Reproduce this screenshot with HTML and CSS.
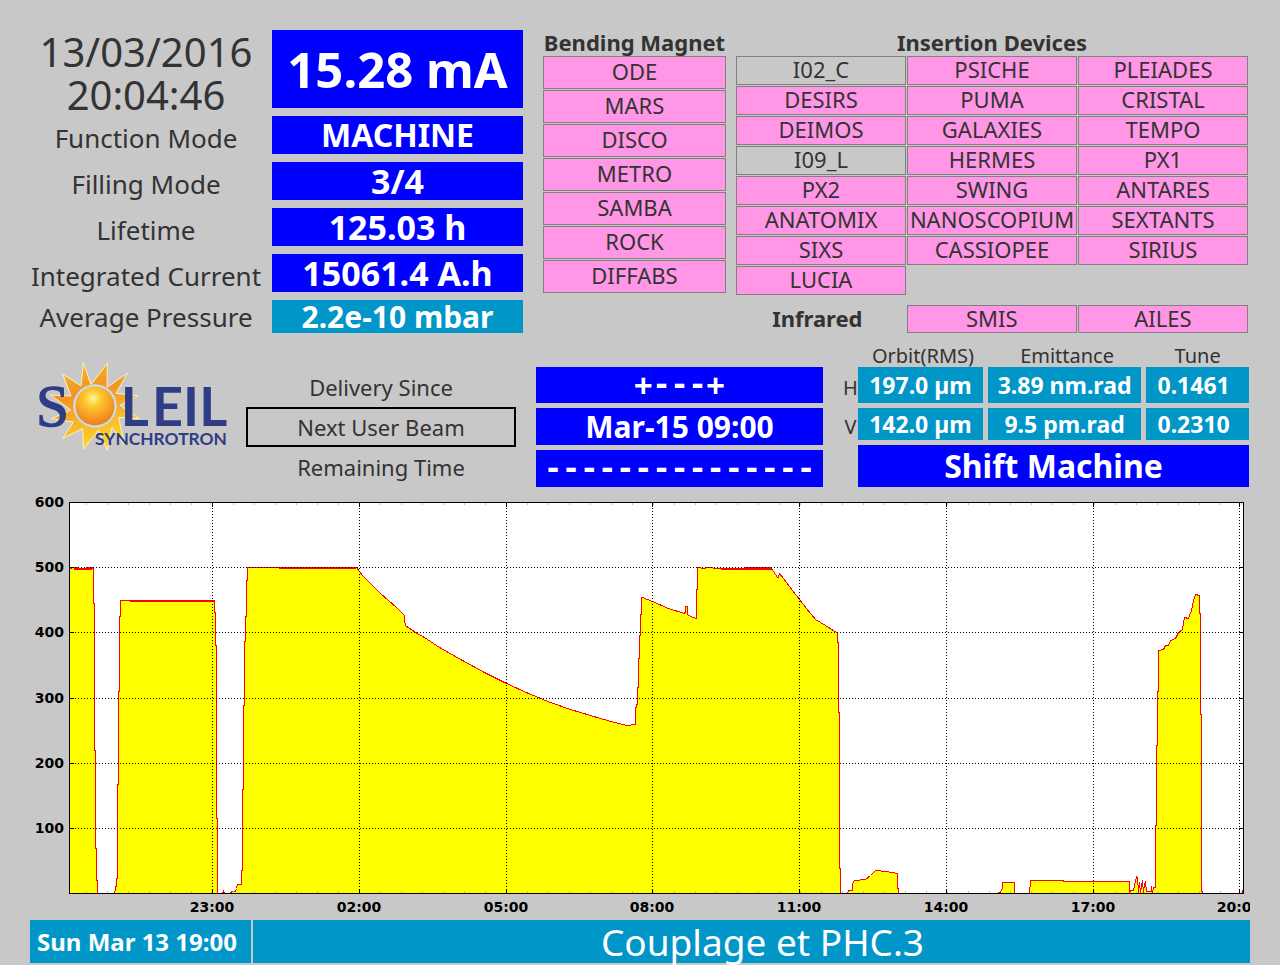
FILE: index.html
```html
<!DOCTYPE html>
<html lang="en">
<head>
  <meta charset="UTF-8">
  <title>SOLEIL Machine Status</title>
  <link rel="stylesheet" href="styles.css">
</head>
<body>
  <main>
    <section class="top">
      <div class="readings">
        <div class="clock">13/03/2016<br>20:04:46</div>
        <div class="value current">15.28 mA</div>
        <div class="label">Function Mode</div>
        <div class="value word">MACHINE</div>
        <div class="label">Filling Mode</div>
        <div class="value">3/4</div>
        <div class="label">Lifetime</div>
        <div class="value">125.03 h</div>
        <div class="label">Integrated Current</div>
        <div class="value">15061.4 A.h</div>
        <div class="label pressure-label">Average Pressure</div>
        <div class="value pressure">2.2e-10 mbar</div>
      </div>

      <div class="bending">
        <h2>Bending Magnet</h2>
        <ul class="beamlines">
          <li>ODE</li>
          <li>MARS</li>
          <li>DISCO</li>
          <li>METRO</li>
          <li>SAMBA</li>
          <li>ROCK</li>
          <li>DIFFABS</li>
        </ul>
      </div>

      <div class="insertion">
        <h2>Insertion Devices</h2>
        <ul class="beamlines">
          <li class="off">I02_C</li>
          <li>PSICHE</li>
          <li>PLEIADES</li>
          <li>DESIRS</li>
          <li>PUMA</li>
          <li>CRISTAL</li>
          <li>DEIMOS</li>
          <li>GALAXIES</li>
          <li>TEMPO</li>
          <li class="off">I09_L</li>
          <li>HERMES</li>
          <li>PX1</li>
          <li>PX2</li>
          <li>SWING</li>
          <li>ANTARES</li>
          <li>ANATOMIX</li>
          <li>NANOSCOPIUM</li>
          <li>SEXTANTS</li>
          <li>SIXS</li>
          <li>CASSIOPEE</li>
          <li>SIRIUS</li>
          <li>LUCIA</li>
        </ul>
        <div class="infrared">
          <h2>Infrared</h2>
          <ul class="beamlines">
            <li>SMIS</li>
            <li>AILES</li>
          </ul>
        </div>
      </div>
    </section>

    <section class="middle">
      <svg class="logo" viewBox="30 0 648 330" role="img" aria-label="SOLEIL Synchrotron">
        <defs>
          <radialGradient id="ball" cx="45%" cy="30%" r="70%">
            <stop offset="0" stop-color="#fff6a0"/>
            <stop offset="0.3" stop-color="#fdc82c"/>
            <stop offset="1" stop-color="#ee7d1c"/>
          </radialGradient>
          <linearGradient id="rays" x1="0" y1="0" x2="0.3" y2="1">
            <stop offset="0" stop-color="#fbc02a"/>
            <stop offset="0.4" stop-color="#f39324"/>
            <stop offset="1" stop-color="#fdd32c"/>
          </linearGradient>
        </defs>
        <path fill="url(#rays)" stroke="#fff3b8" stroke-width="3" stroke-linejoin="round" d="M190 38 L213 104 L262 40 L261 112 L322 70 L288 130 L353 137 L300 166 L358 206 L296 202 L313 285 L276 232 L262 301 L236 240 L190 297 L188 236 L128 265 L160 216 L95 206 L152 180 L92 135 L153 138 L128 72 L183 108 Z"/>
        <circle cx="225" cy="168" r="66" fill="#c8c8c8"/>
        <circle cx="225" cy="168" r="62" fill="none" stroke="#f4f0e4" stroke-width="2"/>
        <circle cx="225" cy="168" r="58" fill="url(#ball)"/>
        <text class="logo-name" y="227" x="48 302 396 489 538"><tspan class="logo-s">S</tspan>LEIL</text>
        <text class="logo-sub" x="225" y="285">SYNCHROTRON</text>
      </svg>

      <div class="status-labels">
        <div>Delivery Since</div>
        <div class="framed">Next User Beam</div>
        <div>Remaining Time</div>
      </div>

      <div class="status-values">
        <div class="dashes">+---+</div>
        <div>Mar-15 09:00</div>
        <div class="dashes">---------------</div>
      </div>

      <div class="beam">
        <table>
          <thead>
            <tr>
              <td class="corner"></td>
              <th scope="col" class="orbit">Orbit(RMS)</th>
              <th scope="col" class="emittance">Emittance</th>
              <th scope="col">Tune</th>
            </tr>
          </thead>
          <tbody>
            <tr class="horizontal">
              <th scope="row">H</th>
              <td>197.0 µm</td>
              <td>3.89 nm.rad</td>
              <td>0.1461</td>
            </tr>
            <tr class="vertical">
              <th scope="row">V</th>
              <td>142.0 µm</td>
              <td>9.5 pm.rad</td>
              <td>0.2310</td>
            </tr>
          </tbody>
        </table>
        <div class="shift">Shift Machine</div>
      </div>
    </section>

    <!-- stored current over the last 24 hours, in mA -->
    <svg class="chart" viewBox="30 497 1220 418" role="img" aria-label="Stored current, last 24 hours">
      <rect x="69" y="502" width="1175" height="392" fill="#fff"/>
      <g class="plot" transform="translate(0.5 0.5)">
        <polygon class="data" points="69,893 69,568 75,567 80,568 92,567 93,569 93,603 94,603 94,750 95,750 95,848 96,848 96,880 97,880 97,893 114,893 115,888 116,884 116,878 117,878 117,784 118,784 118,691 119,691 119,616 120,616 120,600 214,600 214,612 215,612 215,645 216,645 216,818 217,818 217,893 222,893 223,891 224,893 230,893 231,891 235,891 236,888 237,884 241,884 241,870 242,870 242,789 243,789 243,705 244,705 244,641 245,641 245,616 246,616 246,580 247,580 247,567 356,567 362,575 371,584 380,593 388,600 396,607 402,613 404,615 404,620 405,625 415,632 424,637 439,647 462,660 484,672 506,683 528,693 550,702 570,709 590,715 600,718 614,722 627,725 635,724 635,707 636,707 636,704 637,704 637,687 638,687 638,658 639,658 639,635 640,635 640,614 641,614 641,597 642,597 652,601 668,608 684,613 685,611 685,606 687,606 687,614 690,616 696,618 696,589 697,589 697,567 703,568 707,567 718,568 770,567 773,571 777,577 778,577 779,573 783,578 792,590 799,599 806,608 815,619 825,625 836,632 837,633 837,642 838,642 838,712 839,712 839,868 840,868 840,893 847,893 848,890 852,890 852,883 854,880 865,879 870,875 875,870 886,871 897,873 897,888 898,888 898,893 997,893 1001,891 1002,887 1002,882 1014,882 1014,893 1029,893 1030,880 1063,880 1063,881 1129,881 1129,893 1130,890 1133,890 1134,885 1136,876 1137,877 1138,892 1139,882 1140,892 1141,885 1142,880 1143,892 1144,884 1145,881 1146,891 1151,891 1151,886 1152,893 1153,887 1155,887 1155,825 1156,825 1156,745 1157,745 1157,691 1158,691 1158,650 1163,649 1165,645 1168,645 1170,640 1175,638 1178,632 1182,629 1184,617 1188,618 1191,610 1193,600 1195,594 1199,595 1199,613 1200,613 1200,714 1201,714 1201,889 1202,893 1242,893 1242,890 1243,893"/>
        <path class="noise" d="M73 568 H91 M129 600 H214 M278 567 H355 M720 568 H770"/>
        <path class="minor" transform="translate(-0.5 -0.5)" d="M86 504 H1243 M86 892 H1243"/>
        <path class="grid" transform="translate(-0.5 0)" d="M69 567 H1243 M69 632 H1243 M69 698 H1243 M69 763 H1243 M69 828 H1243"/>
        <path class="grid" transform="translate(0 -0.5)" d="M212 502 V893 M359 502 V893 M506 502 V893 M652 502 V893 M799 502 V893 M946 502 V893 M1093 502 V893 M1239 502 V893"/>
        <path class="axis" d="M212 502 v4 M359 502 v4 M506 502 v4 M652 502 v4 M799 502 v4 M946 502 v4 M1093 502 v4 M1239 502 v4 M212 893 v-4 M359 893 v-4 M506 893 v-4 M652 893 v-4 M799 893 v-4 M946 893 v-4 M1093 893 v-4 M1239 893 v-4"/>
        <path class="axis" d="M69 567 h4 M69 632 h4 M69 698 h4 M69 763 h4 M69 828 h4 M1243 567 h-4 M1243 632 h-4 M1243 698 h-4 M1243 763 h-4 M1243 828 h-4"/>
        <rect class="axis" x="69" y="502" width="1174" height="391"/>
      </g>
      <g class="y-labels">
        <text x="64" y="507">600</text>
        <text x="64" y="572">500</text>
        <text x="64" y="637">400</text>
        <text x="64" y="703">300</text>
        <text x="64" y="768">200</text>
        <text x="64" y="833">100</text>
      </g>
      <g class="x-labels">
        <text x="212" y="912">23:00</text>
        <text x="359" y="912">02:00</text>
        <text x="506" y="912">05:00</text>
        <text x="652" y="912">08:00</text>
        <text x="799" y="912">11:00</text>
        <text x="946" y="912">14:00</text>
        <text x="1093" y="912">17:00</text>
        <text x="1239" y="912">20:00</text>
      </g>
    </svg>

    <footer>
      <div class="date">Sun Mar 13 19:00</div>
      <div class="message">Couplage et PHC.3</div>
    </footer>
  </main>
</body>
</html>
```
FILE: styles.css
```css
* { box-sizing: border-box; }
body { margin: 0; padding: 30px 30px 2px; background: #c8c8c8; color: #333; font-family: "Noto Sans", sans-serif; white-space: nowrap; }
h2 { margin: 0; padding-bottom: 2px; font-size: 22px; line-height: 24px; text-align: center; }
ul { margin: 0; padding: 0; list-style: none; }

.top { display: grid; grid-template-columns: minmax(0, 493fr) minmax(0, 203fr) minmax(0, 522fr); padding-right: 2px; }
.bending { margin-left: 20px; }
.insertion { margin-left: 10px; }

/* left block */
.readings { display: grid; grid-template-columns: minmax(0, 242fr) minmax(0, 251fr); row-gap: 8px; }
.clock { margin: 0 10px -8px 0; font-size: 40px; line-height: 43px; text-align: center; }
.label { display: flex; align-items: center; justify-content: center; padding: 6px 10px 0 0; font-size: 26px; line-height: 32px; }
.pressure-label { padding-top: 0; }
.value { display: flex; align-items: center; justify-content: center; min-height: 38px; background: #00f; color: #fff; font-size: 34px; font-weight: bold; line-height: 32px; }
.current { min-height: 78px; font-size: 49px; }
.word { font-size: 32px; }
.pressure { min-height: 33px; background: #0096c8; font-size: 30px; }

/* beamlines */
.beamlines { display: grid; gap: 1px; }
.beamlines li { padding-bottom: 2px; border: 1px solid #808080; background: #ff96e6; font-size: 22px; line-height: 29px; text-align: center; }
.beamlines .off { background: none; }
.insertion .beamlines { grid-template-columns: repeat(3, minmax(0, 1fr)); }
.insertion .beamlines li { line-height: 25px; }
.infrared { display: grid; grid-template-columns: minmax(0, 1fr) minmax(0, 2fr); align-items: center; margin-top: 10px; }
.infrared h2 { padding-right: 8px; }
.insertion .infrared .beamlines { grid-template-columns: repeat(2, minmax(0, 1fr)); }
.insertion .infrared li { line-height: 24px; }

/* logo, delivery and beam quality */
.middle { display: grid; grid-template-columns: minmax(0, 216fr) minmax(0, 270fr) minmax(0, 307fr) minmax(0, 426fr); align-items: end; margin-top: 12px; padding-right: 1px; }
.logo { align-self: start; width: 100%; margin-top: 5px; }
.logo-name { fill: #2f3c86; font-family: Lato, sans-serif; font-size: 162px; font-weight: bold; }
.logo-s { font-family: "Liberation Serif", serif; font-size: 178px; font-weight: normal; stroke: #2f3c86; stroke-width: 4; }
.logo-sub { fill: #2f3c86; font-family: Lato, sans-serif; font-size: 52px; font-weight: bold; }
.status-labels { font-size: 22px; line-height: 40px; text-align: center; }
.status-labels .framed { border: 2px solid #000; line-height: 36px; }
.status-values { display: grid; gap: 5px; margin-left: 20px; }
.status-values div { background: #00f; color: #fff; font-size: 30px; font-weight: bold; line-height: 37px; text-align: center; }
.status-values .dashes { font-family: "DejaVu Sans Mono", monospace; }
.status-values div:first-child { line-height: 36px; }

.beam { margin-left: 20px; }
.beam table { width: 100%; border-collapse: separate; border-spacing: 0; table-layout: fixed; }
.beam th { padding: 0; font-size: 20px; font-weight: normal; line-height: 22px; }
.beam td { padding: 0; border-right: 5px solid #c8c8c8; border-bottom: 5px solid #c8c8c8; background: #0096c8; color: #fff; font-size: 23px; font-weight: bold; line-height: 30px; text-align: center; }
.beam td:last-child { padding-right: 8px; border-right: 0; }
.beam .corner { width: 15px; border: 0; background: none; }
.beam .orbit { width: 32%; }
.beam .emittance { width: 39%; }
.horizontal td { height: 41px; }
.vertical td { height: 37px; }
.shift { margin-left: 15px; background: #00f; color: #fff; font-size: 32px; font-weight: bold; line-height: 42px; text-align: center; }

/* chart */
.chart { display: block; width: 100%; margin-top: 10px; }
.chart text { fill: #000; font-family: "DejaVu Sans", sans-serif; font-size: 14px; font-weight: bold; }
.y-labels { text-anchor: end; }
.x-labels { text-anchor: middle; }
.plot { fill: none; stroke-width: 1; shape-rendering: crispEdges; }
.data { fill: #ff0; stroke: #f00; }
.noise { stroke: #f00; stroke-width: 2; }
.minor { stroke: #c0c0c0; stroke-width: 2; stroke-dasharray: 1 20; }
.grid { stroke: #000; stroke-dasharray: 1 2; }
.axis { stroke: #000; }

footer { display: grid; grid-template-columns: minmax(0, 221fr) minmax(0, 997fr); gap: 2px; margin-top: 5px; color: #fff; line-height: 43px; }
footer div { background: #0096c8; }
.date { padding-left: 7px; font-size: 24px; font-weight: bold; }
.message { padding-left: 22px; font-size: 37px; text-align: center; }
```
